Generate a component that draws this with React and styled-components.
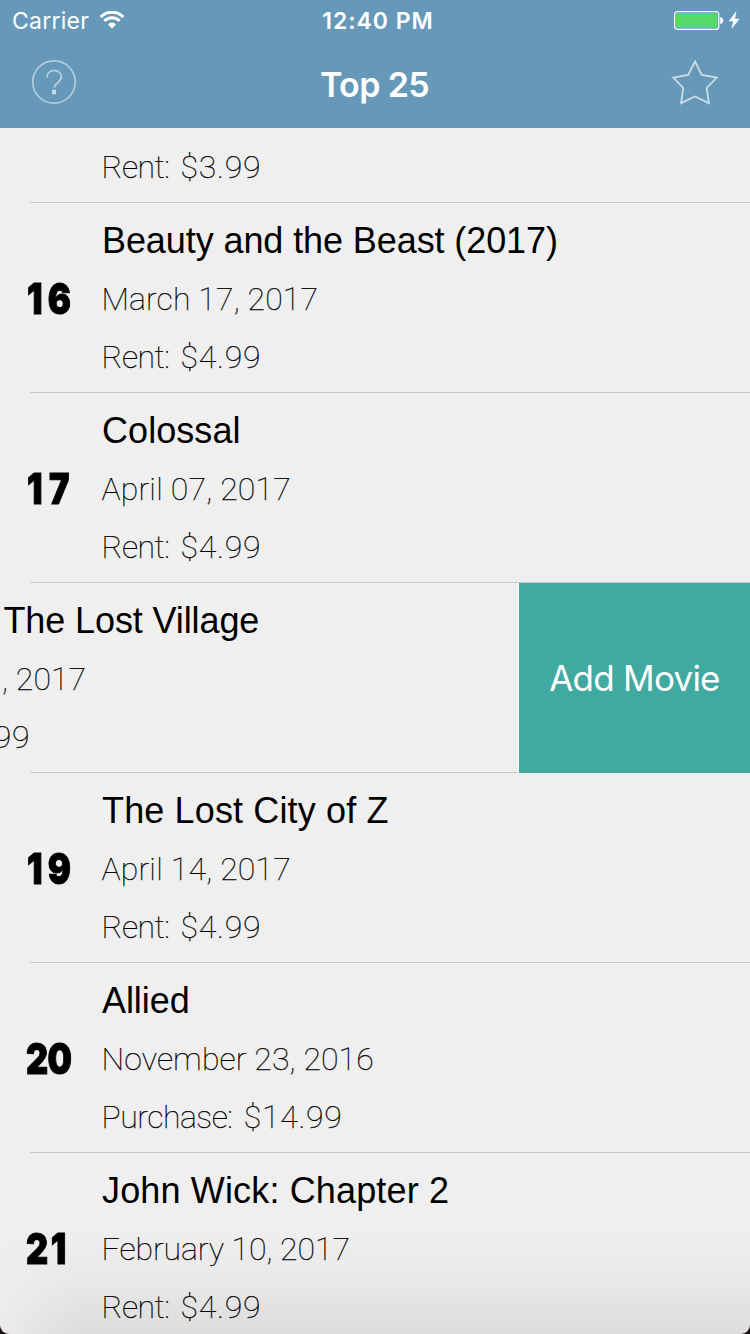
import React from 'react';
import styled, { createGlobalStyle } from 'styled-components';

const GlobalStyle = createGlobalStyle`
  * { box-sizing: border-box; }
  body { margin: 0; background: #1b1416; }
`;

const Screen = styled.div`
  position: relative;
  width: 750px;
  height: 1334px;
  overflow: hidden;
  display: flex;
  flex-direction: column;
  background: #efefef;
  border-radius: 0 0 9px 9px;
  color: #000;
`;

const Header = styled.header`
  flex: none;
  height: 128px;
  background: #6699b9;
  color: #fff;
  font-family: Inter, sans-serif;
`;

const StatusBar = styled.div`
  display: grid;
  grid-template-columns: 1fr auto 1fr;
  align-items: center;
  height: 40px;
  padding: 0 9px 0 12px;
`;

const Carrier = styled.div`
  display: flex;
  align-items: center;
  gap: 10px;
  height: 40px;
  font-size: 23px;
  letter-spacing: 0.25px;
  line-height: 38px;

  span { padding-top: 2px; }
`;

const Clock = styled.div`
  height: 40px;
  font-size: 23px;
  font-weight: 600;
  letter-spacing: 0.95px;
  line-height: 38px;
  padding: 2px 0 0 3px;
`;

const Power = styled.div`
  display: flex;
  justify-content: flex-end;
`;

const NavBar = styled.nav`
  display: flex;
  align-items: center;
  justify-content: space-between;
  height: 88px;
  padding: 0 31px;
`;

const NavTitle = styled.h1`
  margin: 0;
  padding: 1px 0 0 1px;
  font-size: 34px;
  font-weight: 600;
  letter-spacing: -0.6px;
  line-height: 88px;
`;

const IconButton = styled.button`
  display: flex;
  padding: 0;
  margin: 0 0 4px;
  border: 0;
  background: none;
`;

const List = styled.main`
  flex: 1;
  min-height: 0;
  overflow: hidden;
`;

const ScrolledRow = styled.div`
  height: 75px;
  overflow: hidden;
  display: flex;
  flex-direction: column;
  justify-content: flex-end;
`;

const Row = styled.section`
  flex: none;
  height: 190px;
  display: flex;
  overflow: hidden;
  background: linear-gradient(#c8c7cc, #c8c7cc) 30px 100% / 720px 1px no-repeat;
`;

const Content = styled.div`
  flex: none;
  width: 750px;
  height: 189px;
  display: flex;
  align-items: center;
  margin-left: ${(p) => (p.$swiped ? '-231px' : '0')};
`;

const Rank = styled.div`
  flex: none;
  width: 102px;
  padding: 1px 0 0 ${(p) => (p.$gap > 5 ? 27 : 26)}px;
  font: 900 43px/58px Inter, sans-serif;
  -webkit-text-stroke: 1px #000;

  span {
    display: inline-block;
    letter-spacing: ${(p) => p.$gap || 0}px;
    transform: scaleX(0.8);
    transform-origin: left center;
  }
`;

const Details = styled.div`
  display: flex;
  flex-direction: column;
  padding-top: 2px;
  white-space: nowrap;
`;

const Title = styled.h2`
  margin: 0;
  font: 400 36px/58px 'Liberation Sans', Arial, sans-serif;
  letter-spacing: ${(p) => p.$tracking || 0}px;
`;

const Meta = styled.p`
  margin: 0 0 0 -0.5px;
  font: 100 32px/58px Roboto, sans-serif;
  letter-spacing: ${(p) => p.$tracking || 0}px;
  -webkit-text-stroke: 0.25px #000;
`;

const PriceLabel = styled.span`
  letter-spacing: -0.5px;
  word-spacing: 4px;
`;

const WifiIcon = () => (
  <svg width="26" height="18" viewBox="0 0 26 18" fill="none" stroke="#fff" strokeWidth="3">
    <path d="M1.6 6.1a16 16 0 0 1 22.8 0" />
    <path d="M5.4 10a10.7 10.7 0 0 1 15.2 0" />
    <path d="M13 17.4l-4.1-4.1a5.8 5.8 0 0 1 8.2 0z" fill="#fff" stroke="none" />
  </svg>
);

const AddButton = styled.button`
  flex: none;
  width: 232px;
  height: 190px;
  margin-left: -1px;
  padding: 0;
  border: 0;
  border-left: 1px solid #fff;
  background: #40aaa1;
  color: #fff;
  font: 380 35px/190px Inter, sans-serif;
  letter-spacing: -0.75px;
`;

const BottomShade = styled.div`
  position: absolute;
  inset: auto 0 0 0;
  height: 110px;
  pointer-events: none;
  background: linear-gradient(rgba(0, 0, 0, 0), rgba(0, 0, 0, 0.025) 50%, rgba(0, 0, 0, 0.075));
  mask-image: linear-gradient(to right, rgba(0, 0, 0, 0.2), #000 80px);
`;

const BatteryIcon = () => (
  <svg width="67" height="20" viewBox="0 0 67 20">
    <rect x="0.6" y="1.6" width="44.2" height="17.8" rx="3" fill="none" stroke="#fff" strokeWidth="1.2" />
    <rect x="2" y="3" width="41.4" height="15" rx="1.8" fill="#55d969" />
    <path d="M46.2 7c4 .4 4 6.6 0 7z" fill="#fff" />
    <path d="M62.4 1l-7.700 10.300h4.400l-1.800 8 8.300-10.600h-4.600z" fill="#fff" />
  </svg>
);

const HelpIcon = () => (
  <svg width="46" height="46" viewBox="0 0 46 46" fill="none" stroke="#fff" strokeOpacity="0.5" strokeWidth="1.7">
    <circle cx="23" cy="23" r="21.2" />
    <path d="M16 18.500c0-4.300 3-7 7.200-7s7.200 2.800 7.200 6.600c0 5-6.700 5.600-7 10.500" strokeWidth="1.900" />
    <path d="M23 30.700v4.500" strokeWidth="4" strokeOpacity="0.65" />
  </svg>
);

const StarIcon = () => (
  <svg width="48" height="46" viewBox="0 0 48 46" fill="none" stroke="#fff" strokeOpacity="0.66" strokeWidth="1.8">
    <path d="M24 2.500l6.800 13.500 14.900 2.500-10 10.500 2.200 15.100L24 37.400 10.100 44.100l2.200-15.100L2.300 18.500l14.900-2.500z" />
  </svg>
);

const movies = [
  { rank: 16, gap: 6.5, title: 'Beauty and the Beast (2017)', tt: -0.09, date: 'March 17, 2017', dt: 0.12, label: 'Rent:', price: '$4.99' },
  { rank: 17, gap: 8, title: 'Colossal', tt: 0.06, date: 'April 07, 2017', dt: 0.18, label: 'Rent:', price: '$4.99' },
  { rank: 18, gap: 6.5, title: 'Smurfs: The Lost Village', tt: -0.11, date: 'March 31, 2017', dt: 0.05, label: 'Rent:', price: '$4.99', swiped: true },
  { rank: 19, gap: 6.5, title: 'The Lost City of Z', tt: 0.14, date: 'April 14, 2017', dt: 0.18, label: 'Rent:', price: '$4.99' },
  { rank: 20, gap: -1, title: 'Allied', tt: -0.07, date: 'November 23, 2016', dt: 0.1, label: 'Purchase:', price: '$14.99' },
  { rank: 21, gap: 3, title: 'John Wick: Chapter 2', tt: 0.15, date: 'February 10, 2017', dt: -0.06, label: 'Rent:', price: '$4.99' },
];

const Price = ({ label, amount }) => (
  <Meta $tracking={0.74}><PriceLabel>{label} </PriceLabel>{amount}</Meta>
);

const MovieRow = ({ movie }) => (
  <Row>
    <Content $swiped={movie.swiped}>
      <Rank $gap={movie.gap}><span>{movie.rank}</span></Rank>
      <Details>
        <Title $tracking={movie.tt}>{movie.title}</Title>
        <Meta $tracking={movie.dt}>{movie.date}</Meta>
        <Price label={movie.label} amount={movie.price} />
      </Details>
    </Content>
    {movie.swiped && <AddButton>Add Movie</AddButton>}
  </Row>
);

export default function App() {
  return (
    <>
      <GlobalStyle />
      <Screen>
        <Header>
          <StatusBar>
            <Carrier><span>Carrier</span> <WifiIcon /></Carrier>
            <Clock>12:40 PM</Clock>
            <Power><BatteryIcon /></Power>
          </StatusBar>
          <NavBar>
            <IconButton aria-label="Help"><HelpIcon /></IconButton>
            <NavTitle>Top 25</NavTitle>
            <IconButton aria-label="Favorites"><StarIcon /></IconButton>
          </NavBar>
        </Header>
        <List>
          <ScrolledRow>
            <Row>
              <Content>
                <Rank />
                <Details>
                  <Title>&nbsp;</Title>
                  <Meta>&nbsp;</Meta>
                  <Price label="Rent:" amount="$3.99" />
                </Details>
              </Content>
            </Row>
          </ScrolledRow>
          {movies.map((m) => <MovieRow key={m.rank} movie={m} />)}
        </List>
        <BottomShade />
      </Screen>
    </>
  );
}
